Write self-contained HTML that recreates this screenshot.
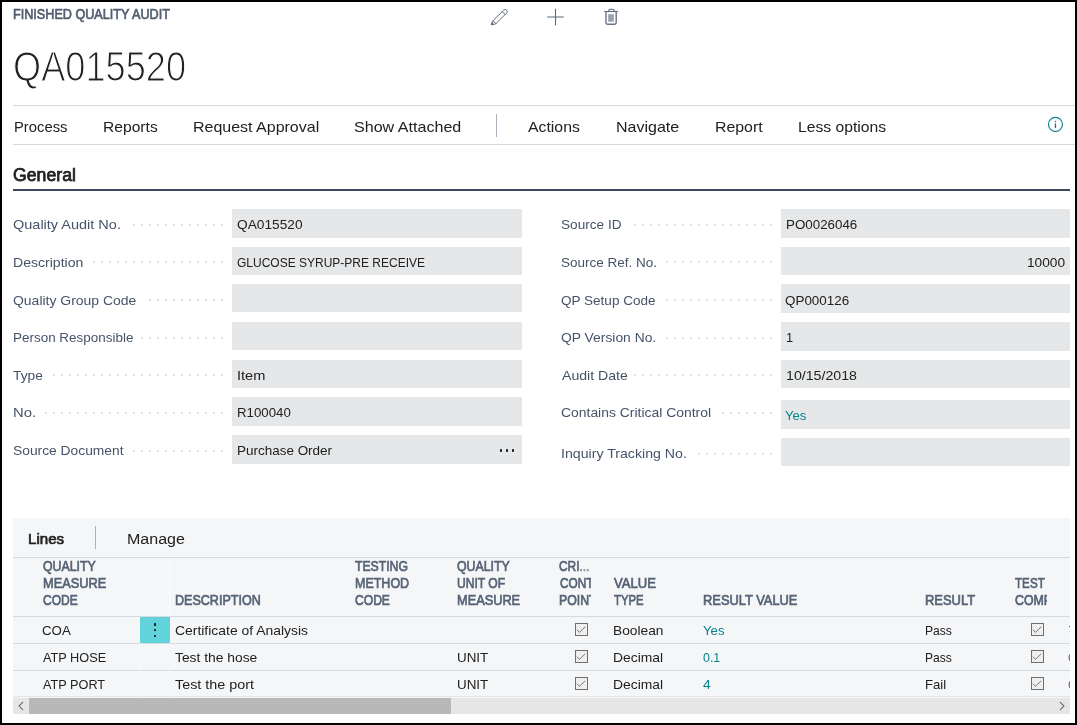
<!DOCTYPE html>
<html lang="en">
<head>
<meta charset="utf-8">
<title>Finished Quality Audit - QA015520</title>
<style>
html,body{margin:0;padding:0;}
body{width:1077px;height:725px;overflow:hidden;background:#fff;position:relative;font-family:"Liberation Sans",sans-serif;}
.a{position:absolute;}
.t{position:absolute;white-space:pre;transform-origin:0 0;display:block;}
#tx{position:absolute;left:0;top:0;width:1077px;height:725px;will-change:transform;}
.clip{position:absolute;overflow:hidden;}
.frame{position:absolute;left:0;top:0;width:1073px;height:721px;border:2px solid #000;z-index:50;pointer-events:none;}
.hl{position:absolute;height:1px;background:#d6dade;}
.box{position:absolute;height:28px;background:#e6e7e8;}
.dots{position:absolute;height:2px;background-image:linear-gradient(90deg,#e1e4e7 2px,rgba(255,255,255,0) 2px);background-size:8px 2px;background-repeat:repeat-x;}
.panel{position:absolute;left:13px;top:518px;width:1057px;height:180px;background:#f5f6f8;}
.cb{position:absolute;width:11px;height:11px;border:1px solid #6e6e6e;background:#efefef;}
.cb svg{position:absolute;left:0;top:0;}
</style>
</head>
<body>
<div class="frame"></div>

<!-- header icons -->
<svg class="a" style="left:488px;top:6px" width="24" height="24" viewBox="0 0 24 24" fill="none" stroke="#616d7e" stroke-width="1" stroke-linejoin="round" stroke-linecap="round">
  <path d="M3.6 18.5 L5.1 14.7 L15.7 4.1 a2.05 2.05 0 0 1 2.9 2.9 L8 17.6 Z"/>
  <path d="M5.1 14.7 L8 17.6"/>
  <path d="M14.2 5.6 L17.1 8.5"/>
  <path d="M3.6 18.5 L5.2 18 L4.2 17 Z" fill="#616d7e"/>
</svg>
<svg class="a" style="left:543px;top:5px" width="24" height="24" viewBox="0 0 24 24" fill="none" stroke="#5b6a7b" stroke-width="1.1">
  <path d="M12.5 3.8 V20.2 M4.2 12 H20.8"/>
</svg>
<svg class="a" style="left:596px;top:4px" width="30" height="26" viewBox="0 0 30 26" fill="none" stroke="#5d6879" stroke-width="1.2">
  <path d="M8.2 7.5 H21.9" stroke-width="1.1"/>
  <path d="M12.8 7.5 V6.4 a1.1 1.1 0 0 1 1.1 -1.1 H16.9 a1.1 1.1 0 0 1 1.1 1.1 V7.5" stroke-width="1.1"/>
  <path d="M9.95 7.5 V18.8 a1.45 1.45 0 0 0 1.45 1.45 H18.75 a1.45 1.45 0 0 0 1.45 -1.45 V7.5" stroke-width="1.4" stroke="#68748a"/>
  <rect x="12.2" y="10.2" width="5.6" height="7.5" fill="#9ba2ae" stroke="none"/>
</svg>

<!-- action bar -->
<div class="hl" style="left:13px;top:105px;width:1062px"></div>
<div class="hl" style="left:13px;top:144px;width:1062px"></div>
<div class="a" style="left:496px;top:114px;width:1px;height:23px;background:#a9b1bb"></div>
<svg class="a" style="left:1046px;top:115px" width="20" height="20" viewBox="0 0 20 20" fill="none" stroke="#117f8d" stroke-width="1.15">
  <circle cx="9.45" cy="9.4" r="7"/>
  <path d="M9.45 8.3 V13" stroke-width="1.3"/>
  <circle cx="9.45" cy="6.4" r="0.75" fill="#117f8d" stroke="none"/>
</svg>

<!-- General -->
<div class="a" style="left:13px;top:189px;width:1057px;height:2px;background:#3b495e"></div>

<!-- field boxes left -->
<div class="box" style="left:232px;top:209px;width:290px;height:29px"></div>
<div class="box" style="left:232px;top:247px;width:290px"></div>
<div class="box" style="left:232px;top:284px;width:290px"></div>
<div class="box" style="left:232px;top:322px;width:290px"></div>
<div class="box" style="left:232px;top:360px;width:290px"></div>
<div class="box" style="left:232px;top:397px;width:290px;height:29px"></div>
<div class="box" style="left:232px;top:435px;width:290px;height:29px"></div>
<!-- field boxes right -->
<div class="box" style="left:781px;top:209px;width:289px;height:29px"></div>
<div class="box" style="left:781px;top:247px;width:289px"></div>
<div class="box" style="left:781px;top:284px;width:289px;height:29px"></div>
<div class="box" style="left:781px;top:322px;width:289px;height:29px"></div>
<div class="box" style="left:781px;top:360px;width:289px"></div>
<div class="box" style="left:781px;top:400px;width:289px;height:29px"></div>
<div class="box" style="left:781px;top:438px;width:289px"></div>

<div class="dots" style="left:133px;top:224px;width:90px"></div>
<div class="dots" style="left:93px;top:261px;width:130px"></div>
<div class="dots" style="left:149px;top:299px;width:74px"></div>
<div class="dots" style="left:141px;top:337px;width:82px"></div>
<div class="dots" style="left:53px;top:374px;width:170px"></div>
<div class="dots" style="left:45px;top:412px;width:178px"></div>
<div class="dots" style="left:133px;top:450px;width:90px"></div>
<div class="dots" style="left:634px;top:224px;width:138px"></div>
<div class="dots" style="left:666px;top:261px;width:106px"></div>
<div class="dots" style="left:666px;top:299px;width:106px"></div>
<div class="dots" style="left:666px;top:337px;width:106px"></div>
<div class="dots" style="left:634px;top:374px;width:138px"></div>
<div class="dots" style="left:722px;top:412px;width:50px"></div>
<div class="dots" style="left:698px;top:453px;width:74px"></div>

<!-- ellipsis in Source Document -->
<div class="a" style="left:499.9px;top:449.2px;width:2.4px;height:2.4px;border-radius:0.7px;background:#1c1c1c"></div>
<div class="a" style="left:505.8px;top:449.2px;width:2.4px;height:2.4px;border-radius:0.7px;background:#1c1c1c"></div>
<div class="a" style="left:511.7px;top:449.2px;width:2.4px;height:2.4px;border-radius:0.7px;background:#1c1c1c"></div>

<!-- Lines panel -->
<div class="panel"></div>
<div class="a" style="left:95px;top:526px;width:1px;height:23px;background:#a9b1bc"></div>
<div class="hl" style="left:13px;top:557px;width:1057px"></div>
<div class="hl" style="left:13px;top:616px;width:1057px"></div>
<div class="hl" style="left:13px;top:643px;width:1057px"></div>
<div class="hl" style="left:13px;top:670px;width:1057px"></div>
<div class="hl" style="left:13px;top:696px;width:1057px;background:#e3e4e5"></div>
<div class="a" style="left:140px;top:617px;width:1px;height:80px;background:#f5f6f8"></div>
<div class="a" style="left:169px;top:617px;width:1px;height:80px;background:#f5f6f8"></div>
<div class="a" style="left:169px;top:558px;width:1px;height:58px;background:#f9fafb"></div>
<!-- selected row marker -->
<div class="a" style="left:140px;top:617px;width:30px;height:26px;background:#63d3db"></div>
<div class="a" style="left:153.9px;top:623.4px;width:2.3px;height:2.3px;border-radius:0.6px;background:#222"></div>
<div class="a" style="left:153.9px;top:629.2px;width:2.3px;height:2.3px;border-radius:0.6px;background:#222"></div>
<div class="a" style="left:153.9px;top:635px;width:2.3px;height:2.3px;border-radius:0.6px;background:#222"></div>

<div class="cb" style="left:575px;top:623px"><svg width="11" height="11" viewBox="0 0 11 11" fill="none" stroke="#7a7a7a" stroke-width="1"><path d="M1 5.6 L3.4 8.4 L9.2 2.8"/></svg></div>
<div class="cb" style="left:1031px;top:623px"><svg width="11" height="11" viewBox="0 0 11 11" fill="none" stroke="#7a7a7a" stroke-width="1"><path d="M1 5.6 L3.4 8.4 L9.2 2.8"/></svg></div>
<div class="cb" style="left:575px;top:650px"><svg width="11" height="11" viewBox="0 0 11 11" fill="none" stroke="#7a7a7a" stroke-width="1"><path d="M1 5.6 L3.4 8.4 L9.2 2.8"/></svg></div>
<div class="cb" style="left:1031px;top:650px"><svg width="11" height="11" viewBox="0 0 11 11" fill="none" stroke="#7a7a7a" stroke-width="1"><path d="M1 5.6 L3.4 8.4 L9.2 2.8"/></svg></div>
<div class="cb" style="left:575px;top:677px"><svg width="11" height="11" viewBox="0 0 11 11" fill="none" stroke="#7a7a7a" stroke-width="1"><path d="M1 5.6 L3.4 8.4 L9.2 2.8"/></svg></div>
<div class="cb" style="left:1031px;top:677px"><svg width="11" height="11" viewBox="0 0 11 11" fill="none" stroke="#7a7a7a" stroke-width="1"><path d="M1 5.6 L3.4 8.4 L9.2 2.8"/></svg></div>

<!-- scrollbar -->
<div class="a" style="left:13px;top:698px;width:1057px;height:16px;background:#e6e6e6"></div>
<div class="a" style="left:29px;top:698px;width:422px;height:16px;background:#b8b8b8"></div>
<svg class="a" style="left:13px;top:698px" width="16" height="16" viewBox="0 0 16 16" fill="none" stroke="#555" stroke-width="1.05"><path d="M10.1 4 L6.1 8 L10.1 12"/></svg>
<svg class="a" style="left:1054px;top:698px" width="16" height="16" viewBox="0 0 16 16" fill="none" stroke="#555" stroke-width="1.05"><path d="M5.9 4 L9.9 8 L5.9 12"/></svg>

<div id="tx">
<span class="t" style="left:12.98px;top:7.00px;font-size:14.5px;line-height:14.5px;color:#515e71;transform:scaleX(0.8707);-webkit-text-stroke:0.7px #515e71;">FINISHED QUALITY AUDIT</span>
<span class="t" style="left:13.20px;top:44.70px;font-size:42.73255813953489px;line-height:42.73255813953489px;color:#212121;transform:scaleX(0.8471);-webkit-text-stroke:1.2px #fff;">QA015520</span>
<span class="t" style="left:13.61px;top:119.00px;font-size:15px;line-height:15px;color:#212121;transform:scaleX(0.9868);">Process</span>
<span class="t" style="left:102.85px;top:119.00px;font-size:15px;line-height:15px;color:#212121;transform:scaleX(1.0414);">Reports</span>
<span class="t" style="left:192.82px;top:119.00px;font-size:15px;line-height:15px;color:#212121;transform:scaleX(1.0658);">Request Approval</span>
<span class="t" style="left:354.03px;top:119.00px;font-size:15px;line-height:15px;color:#212121;transform:scaleX(1.0721);">Show Attached</span>
<span class="t" style="left:528.46px;top:119.00px;font-size:15px;line-height:15px;color:#212121;transform:scaleX(1.0539);">Actions</span>
<span class="t" style="left:616.02px;top:119.00px;font-size:15px;line-height:15px;color:#212121;transform:scaleX(1.0676);">Navigate</span>
<span class="t" style="left:715.03px;top:119.00px;font-size:15px;line-height:15px;color:#212121;transform:scaleX(1.0575);">Report</span>
<span class="t" style="left:798.24px;top:119.00px;font-size:15px;line-height:15px;color:#212121;transform:scaleX(1.0460);">Less options</span>
<span class="t" style="left:12.97px;top:167.00px;font-size:17.6px;line-height:17.6px;color:#212121;transform:scaleX(1.0051);-webkit-text-stroke:0.75px #212121;">General</span>
<span class="t" style="left:12.56px;top:218.00px;font-size:13.5px;line-height:13.5px;color:#455369;transform:scaleX(1.0731);">Quality Audit No.</span>
<span class="t" style="left:13.06px;top:256.00px;font-size:13.5px;line-height:13.5px;color:#455369;transform:scaleX(1.0416);">Description</span>
<span class="t" style="left:12.58px;top:294.00px;font-size:13.5px;line-height:13.5px;color:#455369;transform:scaleX(1.0339);">Quality Group Code</span>
<span class="t" style="left:13.10px;top:331.00px;font-size:13.5px;line-height:13.5px;color:#455369;transform:scaleX(0.9964);">Person Responsible</span>
<span class="t" style="left:12.82px;top:369.00px;font-size:13.5px;line-height:13.5px;color:#455369;transform:scaleX(1.0172);">Type</span>
<span class="t" style="left:12.70px;top:406.00px;font-size:13.5px;line-height:13.5px;color:#455369;transform:scaleX(1.0962);">No.</span>
<span class="t" style="left:12.58px;top:444.00px;font-size:13.5px;line-height:13.5px;color:#455369;transform:scaleX(1.0226);">Source Document</span>
<span class="t" style="left:560.79px;top:218.00px;font-size:13.5px;line-height:13.5px;color:#455369;transform:scaleX(1.0096);">Source ID</span>
<span class="t" style="left:560.80px;top:256.00px;font-size:13.5px;line-height:13.5px;color:#455369;transform:scaleX(1.0003);">Source Ref. No.</span>
<span class="t" style="left:561.20px;top:294.00px;font-size:13.5px;line-height:13.5px;color:#455369;transform:scaleX(1.0023);">QP Setup Code</span>
<span class="t" style="left:561.19px;top:331.00px;font-size:13.5px;line-height:13.5px;color:#455369;transform:scaleX(1.0256);">QP Version No.</span>
<span class="t" style="left:561.66px;top:369.00px;font-size:13.5px;line-height:13.5px;color:#455369;transform:scaleX(1.0442);">Audit Date</span>
<span class="t" style="left:561.15px;top:406.00px;font-size:13.5px;line-height:13.5px;color:#455369;transform:scaleX(1.0305);">Contains Critical Control</span>
<span class="t" style="left:560.61px;top:447.00px;font-size:13.5px;line-height:13.5px;color:#455369;transform:scaleX(1.0480);">Inquiry Tracking No.</span>
<span class="t" style="left:236.50px;top:218.00px;font-size:13.5px;line-height:13.5px;color:#212121;transform:scaleX(1.0157);">QA015520</span>
<span class="t" style="left:236.94px;top:256.00px;font-size:13.5px;line-height:13.5px;color:#212121;transform:scaleX(0.8885);">GLUCOSE SYRUP-PRE RECEIVE</span>
<span class="t" style="left:236.57px;top:369.00px;font-size:13.5px;line-height:13.5px;color:#212121;transform:scaleX(1.0806);">Item</span>
<span class="t" style="left:236.82px;top:406.00px;font-size:13.5px;line-height:13.5px;color:#212121;transform:scaleX(0.9811);">R100040</span>
<span class="t" style="left:236.80px;top:444.00px;font-size:13.5px;line-height:13.5px;color:#212121;transform:scaleX(0.9976);">Purchase Order</span>
<span class="t" style="left:785.51px;top:218.00px;font-size:13.5px;line-height:13.5px;color:#212121;transform:scaleX(0.9892);">PO0026046</span>
<span class="t" style="left:1027.39px;top:256.00px;font-size:13.5px;line-height:13.5px;color:#212121;transform:scaleX(1.0139);">10000</span>
<span class="t" style="left:785.31px;top:294.00px;font-size:13.5px;line-height:13.5px;color:#212121;transform:scaleX(0.9936);">QP000126</span>
<span class="t" style="left:785.55px;top:331.00px;font-size:13.5px;line-height:13.5px;color:#212121;transform:scaleX(0.9500);">1</span>
<span class="t" style="left:785.95px;top:369.00px;font-size:13.5px;line-height:13.5px;color:#212121;transform:scaleX(1.0500);">10/15/2018</span>
<span class="t" style="left:785.16px;top:409.00px;font-size:13.5px;line-height:13.5px;color:#05838b;transform:scaleX(0.9725);">Yes</span>
<span class="t" style="left:28.12px;top:531.00px;font-size:15.2px;line-height:15.2px;color:#212121;transform:scaleX(0.9956);-webkit-text-stroke:0.7px #212121;">Lines</span>
<span class="t" style="left:126.51px;top:531.00px;font-size:15.2px;line-height:15.2px;color:#212121;transform:scaleX(1.0559);">Manage</span>
<span class="t" style="left:43.35px;top:559.00px;font-size:14.5px;line-height:14.5px;color:#566376;transform:scaleX(0.8513);-webkit-text-stroke:0.7px #566376;">QUALITY</span>
<span class="t" style="left:42.97px;top:576.00px;font-size:14.5px;line-height:14.5px;color:#566376;transform:scaleX(0.8832);-webkit-text-stroke:0.7px #566376;">MEASURE</span>
<span class="t" style="left:43.31px;top:593.00px;font-size:14.5px;line-height:14.5px;color:#566376;transform:scaleX(0.8289);-webkit-text-stroke:0.7px #566376;">CODE</span>
<span class="t" style="left:175.18px;top:593.00px;font-size:14.5px;line-height:14.5px;color:#566376;transform:scaleX(0.8655);-webkit-text-stroke:0.7px #566376;">DESCRIPTION</span>
<span class="t" style="left:355.31px;top:559.00px;font-size:14.5px;line-height:14.5px;color:#566376;transform:scaleX(0.8424);-webkit-text-stroke:0.7px #566376;">TESTING</span>
<span class="t" style="left:354.58px;top:576.00px;font-size:14.5px;line-height:14.5px;color:#566376;transform:scaleX(0.8615);-webkit-text-stroke:0.7px #566376;">METHOD</span>
<span class="t" style="left:354.91px;top:593.00px;font-size:14.5px;line-height:14.5px;color:#566376;transform:scaleX(0.8337);-webkit-text-stroke:0.7px #566376;">CODE</span>
<span class="t" style="left:457.25px;top:559.00px;font-size:14.5px;line-height:14.5px;color:#566376;transform:scaleX(0.8497);-webkit-text-stroke:0.7px #566376;">QUALITY</span>
<span class="t" style="left:456.95px;top:576.00px;font-size:14.5px;line-height:14.5px;color:#566376;transform:scaleX(0.8345);-webkit-text-stroke:0.7px #566376;">UNIT OF</span>
<span class="t" style="left:456.87px;top:593.00px;font-size:14.5px;line-height:14.5px;color:#566376;transform:scaleX(0.8804);-webkit-text-stroke:0.7px #566376;">MEASURE</span>
<span class="t" style="left:559.21px;top:559.00px;font-size:14.5px;line-height:14.5px;color:#566376;transform:scaleX(0.8208);-webkit-text-stroke:0.7px #566376;">CRI<span style="color:#8c8f94;-webkit-text-stroke-color:#8c8f94">...</span></span>
<div class="clip" style="left:557px;top:576.00px;width:34px;height:17.5px"><span class="t" style="left:2.71px;top:0px;font-size:14.5px;line-height:14.5px;color:#566376;transform:scaleX(0.8163);-webkit-text-stroke:0.7px #566376;">CONTROL</span></div>
<div class="clip" style="left:557px;top:593.00px;width:34px;height:17.5px"><span class="t" style="left:2.39px;top:0px;font-size:14.5px;line-height:14.5px;color:#566376;transform:scaleX(0.8496);-webkit-text-stroke:0.7px #566376;">POINT</span></div>
<div class="clip" style="left:1012px;top:593.00px;width:35px;height:17.5px"><span class="t" style="left:3.30px;top:0px;font-size:14.5px;line-height:14.5px;color:#566376;transform:scaleX(0.8513);-webkit-text-stroke:0.7px #566376;">COMPLETED</span></div>
<span class="t" style="left:613.56px;top:576.00px;font-size:14.5px;line-height:14.5px;color:#566376;transform:scaleX(0.9005);-webkit-text-stroke:0.7px #566376;">VALUE</span>
<span class="t" style="left:613.51px;top:593.00px;font-size:14.5px;line-height:14.5px;color:#566376;transform:scaleX(0.7819);-webkit-text-stroke:0.7px #566376;">TYPE</span>
<span class="t" style="left:703.17px;top:593.00px;font-size:14.5px;line-height:14.5px;color:#566376;transform:scaleX(0.8880);-webkit-text-stroke:0.7px #566376;">RESULT VALUE</span>
<span class="t" style="left:924.66px;top:593.00px;font-size:14.5px;line-height:14.5px;color:#566376;transform:scaleX(0.8915);-webkit-text-stroke:0.7px #566376;">RESULT</span>
<span class="t" style="left:1015.11px;top:576.00px;font-size:14.5px;line-height:14.5px;color:#566376;transform:scaleX(0.8030);-webkit-text-stroke:0.7px #566376;">TEST</span>
<span class="t" style="left:42.38px;top:624.00px;font-size:13.5px;line-height:13.5px;color:#212121;transform:scaleX(0.9823);">COA</span>
<span class="t" style="left:174.65px;top:624.00px;font-size:13.5px;line-height:13.5px;color:#212121;transform:scaleX(1.0304);">Certificate of Analysis</span>
<span class="t" style="left:612.78px;top:624.00px;font-size:13.5px;line-height:13.5px;color:#212121;transform:scaleX(1.0176);">Boolean</span>
<span class="t" style="left:702.65px;top:624.00px;font-size:13.5px;line-height:13.5px;color:#05838b;transform:scaleX(0.9772);">Yes</span>
<span class="t" style="left:924.80px;top:624.00px;font-size:13.5px;line-height:13.5px;color:#212121;transform:scaleX(0.8973);">Pass</span>
<span class="t" style="left:42.87px;top:651.00px;font-size:13.5px;line-height:13.5px;color:#212121;transform:scaleX(0.9428);">ATP HOSE</span>
<span class="t" style="left:175.12px;top:651.00px;font-size:13.5px;line-height:13.5px;color:#212121;transform:scaleX(1.0250);">Test the hose</span>
<span class="t" style="left:456.71px;top:651.00px;font-size:13.5px;line-height:13.5px;color:#212121;transform:scaleX(0.9931);">UNIT</span>
<span class="t" style="left:612.77px;top:651.00px;font-size:13.5px;line-height:13.5px;color:#212121;transform:scaleX(1.0277);">Decimal</span>
<span class="t" style="left:703.05px;top:651.00px;font-size:13.5px;line-height:13.5px;color:#05838b;transform:scaleX(0.9201);">0.1</span>
<span class="t" style="left:924.80px;top:651.00px;font-size:13.5px;line-height:13.5px;color:#212121;transform:scaleX(0.8973);">Pass</span>
<span class="t" style="left:42.87px;top:678.00px;font-size:13.5px;line-height:13.5px;color:#212121;transform:scaleX(0.9404);">ATP PORT</span>
<span class="t" style="left:175.11px;top:678.00px;font-size:13.5px;line-height:13.5px;color:#212121;transform:scaleX(1.0621);">Test the port</span>
<span class="t" style="left:456.71px;top:678.00px;font-size:13.5px;line-height:13.5px;color:#212121;transform:scaleX(0.9931);">UNIT</span>
<span class="t" style="left:612.77px;top:678.00px;font-size:13.5px;line-height:13.5px;color:#212121;transform:scaleX(1.0277);">Decimal</span>
<span class="t" style="left:702.72px;top:678.00px;font-size:13.5px;line-height:13.5px;color:#05838b;transform:scaleX(1.0231);">4</span>
<span class="t" style="left:924.73px;top:678.00px;font-size:13.5px;line-height:13.5px;color:#212121;transform:scaleX(0.9750);">Fail</span>
<div class="clip" style="left:1065px;top:624.00px;width:5px;height:16.5px"><span class="t" style="left:3.63px;top:0px;font-size:13.5px;line-height:13.5px;color:#212121;transform:scaleX(0.9207);">True</span></div>
<div class="clip" style="left:1065px;top:651.00px;width:5px;height:16.5px"><span class="t" style="left:3.07px;top:0px;font-size:13.5px;line-height:13.5px;color:#666;transform:scaleX(0.8931);">Open</span></div>
<div class="clip" style="left:1065px;top:678.00px;width:5px;height:16.5px"><span class="t" style="left:3.07px;top:0px;font-size:13.5px;line-height:13.5px;color:#666;transform:scaleX(0.8931);">Open</span></div>
</div>
</body>
</html>
